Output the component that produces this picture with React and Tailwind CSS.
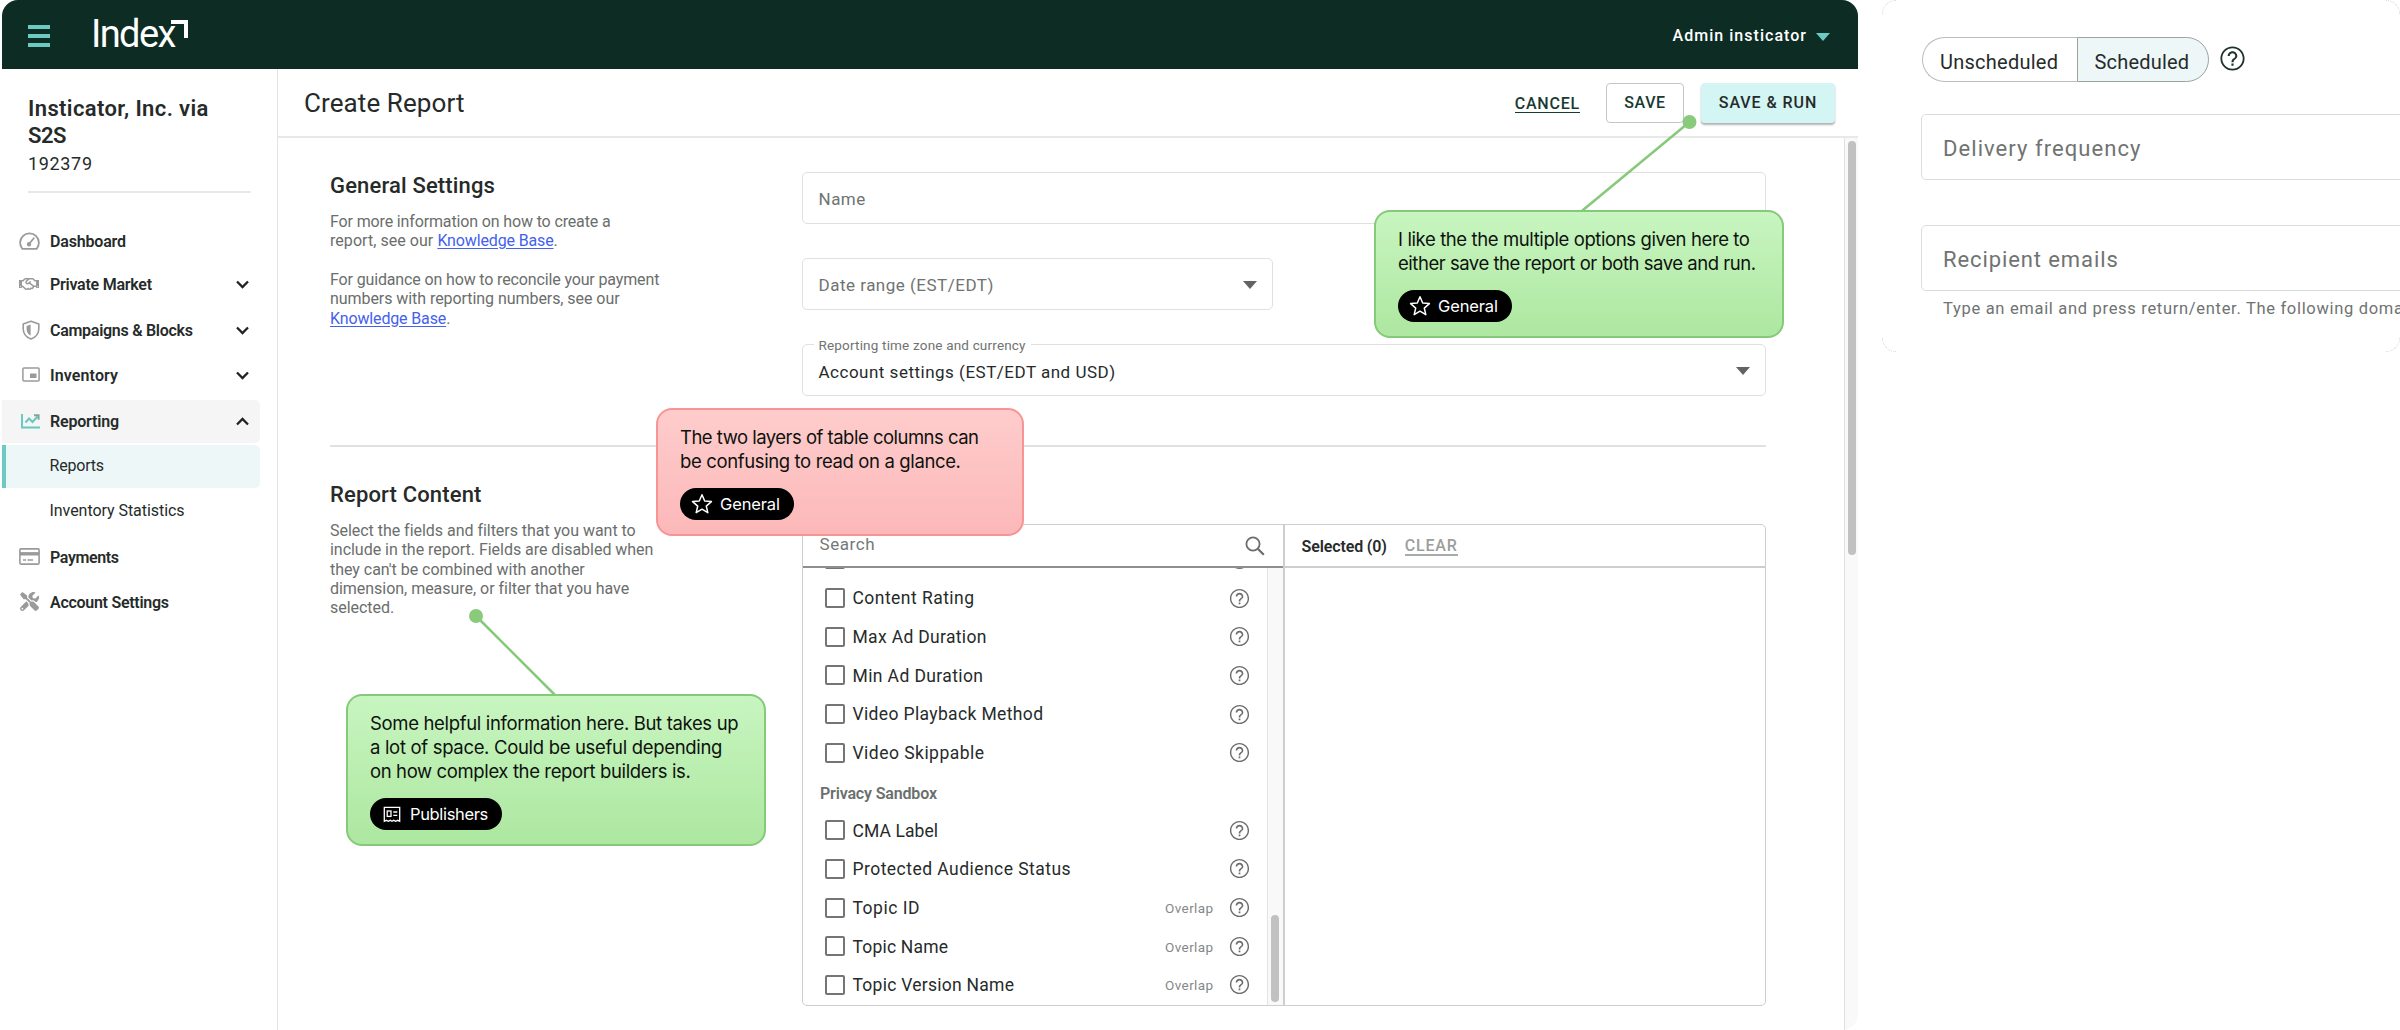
import React from "react";
import { FaRegHandshake, FaTools } from "react-icons/fa";

function GaugeIcon() {
  return (
    <svg className="w-[21px] h-[18px]" viewBox="0 0 21 18" fill="none" stroke="#9a9a9a" strokeWidth="1.8">
      <path d="M3.2 16.8h14.6c1-1.6 2.1-3.4 2.1-6A9.4 9.4 0 0 0 1.1 10.8c0 2.6 1 4.4 2.1 6z" strokeLinejoin="round" />
      <path d="M14.8 6.2l-4.6 5.6" strokeLinecap="round" />
      <circle cx="10" cy="12.2" r="1.3" fill="#9a9a9a" />
    </svg>
  );
}

function ShieldIcon() {
  return (
    <svg className="w-[18px] h-[20px]" viewBox="0 0 18 20" fill="none" stroke="#9a9a9a" strokeWidth="1.6">
      <path d="M9 1.2L16.8 4v4.8c0 5-3.3 8.6-7.8 10.2C4.5 17.4 1.2 13.8 1.2 8.8V4z" strokeLinejoin="round" />
      <path d="M8.6 4.6v11c-2.6-1.4-4-3.8-4-6.7V6z" fill="#9a9a9a" stroke="none" />
    </svg>
  );
}

function InventoryIcon() {
  return (
    <svg className="w-[18px] h-[15px]" viewBox="0 0 18 15" fill="none">
      <rect x="0.9" y="0.9" width="16.2" height="13" rx="1" stroke="#9a9a9a" strokeWidth="1.5" />
      <rect x="8" y="6.5" width="6.5" height="4.5" fill="#9a9a9a" />
    </svg>
  );
}

function ReportingIcon() {
  return (
    <svg className="w-[20px] h-[16px]" viewBox="0 0 20 16" fill="none" stroke="#62c9c0" strokeWidth="1.9">
      <path d="M1 1v13.5h18" />
      <path d="M4.5 9.5l3.5-4 3.5 3.5 5-5.5" />
      <path d="M13 2.2h4.6v4.6" stroke="#7da5a0" />
    </svg>
  );
}

function PaymentsIcon() {
  return (
    <svg className="w-[21px] h-[17px]" viewBox="0 0 21 17" fill="none">
      <rect x="0.9" y="0.9" width="19.2" height="15.2" rx="1" stroke="#9a9a9a" strokeWidth="1.6" />
      <path d="M1 5.8h19" stroke="#9a9a9a" strokeWidth="3.4" />
      <path d="M4 12h3M8.5 12h5.5" stroke="#9a9a9a" strokeWidth="1.7" />
    </svg>
  );
}

function Chevron({ up }) {
  return (
    <svg className="w-[13px] h-[9px]" viewBox="0 0 13 9" fill="none" stroke="#1e2423" strokeWidth="2.3">
      <path d={up ? "M1 7.5l5.5-5.5 5.5 5.5" : "M1 1.5l5.5 5.5 5.5-5.5"} />
    </svg>
  );
}

function Caret({ className }) {
  return (
    <svg className={className} viewBox="0 0 14 8" fill="currentColor">
      <path d="M0 0h14L7 8z" />
    </svg>
  );
}

function HelpIcon({ className }) {
  return (
    <svg className={className} viewBox="0 0 24 24" fill="currentColor">
      <path d="M11.1 18h1.8v-1.9h-1.8V18zM12 2C6.48 2 2 6.48 2 12s4.48 10 10 10 10-4.48 10-10S17.52 2 12 2zm0 18.5c-4.69 0-8.5-3.81-8.5-8.5s3.81-8.5 8.5-8.5 8.5 3.81 8.5 8.5-3.81 8.5-8.5 8.5zM12 6c-2.21 0-4 1.79-4 4h1.7c0-1.27 1.03-2.3 2.3-2.3s2.3 1.03 2.3 2.3c0 2-3.1 1.85-3.1 5h1.7c0-2.25 3.1-2.5 3.1-5 0-2.21-1.79-4-4-4z" />
    </svg>
  );
}

function StarIcon() {
  return (
    <svg className="w-[22px] h-[22px]" viewBox="0 0 22 22" fill="none" stroke="#fff" strokeWidth="1.5" strokeLinejoin="round">
      <path d="M11 1.8l2.7 6.2 6.7.6-5.1 4.5 1.5 6.6L11 16.2l-5.8 3.5 1.5-6.6L1.6 8.6l6.7-.6z" />
    </svg>
  );
}

function NewsIcon() {
  return (
    <svg className="w-[18px] h-[17px]" viewBox="0 0 18 17" fill="none" stroke="#fff" strokeWidth="1.3">
      <path d="M1.3 1.3h15.4v14l-2-1-2 1-1.9-1-1.8 1-1.8-1-1.9 1-2-1-2 1z" />
      <rect x="4.2" y="5" width="3.8" height="5.4" />
      <path d="M10.3 6h4M10.3 9.4h4" />
    </svg>
  );
}

function NavItem({ icon, label, tracking, className = "", chevron, active }) {
  return (
    <div className={`flex h-[43px] w-[258px] items-center rounded-r-[5px] ${active ? "bg-[#f5f5f5]" : ""} ${className}`}>
      <div className="flex w-[48px] shrink-0 items-center pb-0.5">{icon}</div>
      <span className={`flex-1 pt-px text-[16px] font-semibold whitespace-nowrap ${tracking}`}>{label}</span>
      {chevron && (
        <span className="mr-[11px] pb-px">
          <Chevron up={chevron === "up"} />
        </span>
      )}
    </div>
  );
}

function Sidebar() {
  return (
    <aside className="w-[276px] shrink-0 border-r border-[#dfe5e4] pt-[26px] text-[#262b2a]">
      <div className="ml-[26px] w-[223px]">
        <div className="text-[22px] leading-[27px] font-semibold whitespace-nowrap">
          <div className="tracking-[0.38px]">Insticator, Inc. via</div>
          <div className="tracking-[-0.5px]">S2S</div>
        </div>
        <div className="mt-[3px] text-[18px] leading-[24px] tracking-[0.66px]">192379</div>
        <div className="mt-[15px] h-[2px] bg-[#e8e8e8]" />
      </div>
      <nav className="mt-[27px]">
        <NavItem icon={<span className="ml-[17px]"><GaugeIcon /></span>} label="Dashboard" tracking="tracking-[-0.18px]" />
        <NavItem icon={<FaRegHandshake className="mt-px ml-[17px] h-[16px] w-[20px] text-[#9a9a9a]" />} label="Private Market" tracking="tracking-[-0.25px]" chevron="down" />
        <NavItem icon={<span className="ml-[20px]"><ShieldIcon /></span>} label="Campaigns & Blocks" tracking="tracking-[-0.28px]" chevron="down" className="mt-[3px]" />
        <NavItem icon={<span className="ml-[20px]"><InventoryIcon /></span>} label="Inventory" tracking="tracking-[0.12px]" chevron="down" className="mt-[2px]" />
        <NavItem icon={<span className="ml-[19px]"><ReportingIcon /></span>} label="Reporting" tracking="tracking-[-0.19px]" chevron="up" active className="mt-[3px]" />
        <div className="mt-[2px] flex h-[43px] w-[258px] items-center rounded-r-[5px] border-l-4 border-[#6bcac2] bg-[#edf7f8] pb-px pl-[43.5px] text-[16px] tracking-[-0.2px]">Reports</div>
        <div className="mt-px flex h-[43px] items-center pt-px pl-[47.5px] text-[16px] tracking-[-0.05px]">Inventory Statistics</div>
        <NavItem icon={<span className="ml-[17px]"><PaymentsIcon /></span>} label="Payments" tracking="tracking-[-0.38px]" className="mt-[4px]" />
        <NavItem icon={<FaTools className="ml-[18px] h-[19px] w-[19px] text-[#9a9a9a]" />} label="Account Settings" tracking="tracking-[-0.28px]" className="mt-[2px]" />
      </nav>
    </aside>
  );
}

function TopBar() {
  return (
    <header className="flex h-[69px] items-center bg-[#0d2c24] pl-[26px]">
      <div className="mt-[3px] flex w-[22px] flex-col gap-[5px]">
        <div className="h-[4px] bg-[#6bcac2]" />
        <div className="h-[4px] bg-[#6bcac2]" />
        <div className="h-[4px] bg-[#6bcac2]" />
      </div>
      <div className="relative ml-[41px] h-[69px] w-[97px] text-white">
        <span className="block pt-[12px] text-[38px] leading-[44px] font-normal tracking-[-1.6px]">Index</span>
        <span className="absolute top-[20px] right-0 h-[18px] w-[17px] border-t-[4px] border-r-[4px] border-white" />
      </div>
      <div className="flex-1" />
      <span className="mt-[3px] text-[16px] font-medium tracking-[1.03px] text-white">Admin insticator</span>
      <Caret className="mt-[5px] mr-[28px] ml-[9px] h-[8px] w-[14px] text-[#6bcac2]" />
    </header>
  );
}

function PageHeader() {
  return (
    <div className="flex h-[69px] shrink-0 items-center border-b-2 border-[#e8e8e8] pl-[26px] text-[#262b2a]">
      <h1 className="flex-1 pt-[2px] text-[26px] tracking-[0.1px]">Create Report</h1>
      <span className="mt-[2px] mr-[26px] border-b-[1.5px] border-[#173a32] text-[16px] leading-[17px] font-medium tracking-[0.79px] text-[#173a32]">CANCEL</span>
      <button className="flex h-[40px] w-[78px] items-center justify-center rounded-[4px] border-[1.5px] border-[#c4c6c6] pt-px text-[16px] font-medium tracking-[0.6px] text-[#173a32]">SAVE</button>
      <button className="mr-[23px] ml-[17px] flex h-[40px] w-[134px] items-center justify-center rounded-[4px] bg-[#d3f5f3] pt-px text-[16px] font-medium tracking-[0.93px] shadow-[0_2px_2px_rgba(0,0,0,0.3)]">SAVE &amp; RUN</button>
    </div>
  );
}

function Link({ children }) {
  return <span className="text-[#4361ee] underline underline-offset-2">{children}</span>;
}

function GeneralSettings() {
  return (
    <section className="flex pt-[34px]">
      <div className="w-[471.5px] shrink-0 whitespace-nowrap">
        <h2 className="text-[22px] leading-[28px] font-medium tracking-[0.16px] text-[#262b2a]">General Settings</h2>
        <div className="mt-[12px] text-[16px] leading-[19.33px] tracking-[-0.14px] text-[#6a6e6c]">
          <p>For more information on how to create a</p>
          <p><span className="tracking-[0.05px]">report, see our </span><Link>Knowledge Base</Link>.</p>
          <p className="mt-[19.33px]">For guidance on how to reconcile your payment</p>
          <p className="tracking-[-0.06px]">numbers with reporting numbers, see our</p>
          <p><Link>Knowledge Base</Link>.</p>
        </div>
      </div>
      <div className="flex flex-1 flex-col text-[17px] tracking-[0.5px] text-[#6f7371]">
        <div className="flex h-[52px] items-center rounded-[5px] border-[1.5px] border-[#dfe1e1] pt-[3px] pl-[16px]">Name</div>
        <div className="mt-[34px] flex h-[52px] w-[471px] items-center justify-between rounded-[5px] border-[1.5px] border-[#dfe1e1] pt-[3px] pr-[15px] pl-[16px]">
          Date range (EST/EDT)
          <Caret className="mb-px h-[8px] w-[14px] text-[#606563]" />
        </div>
        <div className="relative mt-[34px] flex h-[52px] items-center justify-between rounded-[5px] border-[1.5px] border-[#dfe1e1] pt-[6px] pr-[15px] pl-[16px] text-[#262b2a]">
          <span className="absolute -top-[9px] left-[11px] bg-white px-[5px] text-[13.5px] leading-[18px] tracking-[0.18px] text-[#6f7371]">Reporting time zone and currency</span>
          Account settings (EST/EDT and USD)
          <Caret className="mb-[4px] h-[8px] w-[14px] text-[#606563]" />
        </div>
      </div>
    </section>
  );
}

const fields = [
  { label: "" },
  { label: "Content Rating", t: "tracking-[0.46px]" },
  { label: "Max Ad Duration", t: "tracking-[0.33px]" },
  { label: "Min Ad Duration", t: "tracking-[0.39px]" },
  { label: "Video Playback Method", t: "tracking-[0.36px]" },
  { label: "Video Skippable", t: "tracking-[0.47px]" },
  { section: "Privacy Sandbox" },
  { label: "CMA Label", t: "tracking-[0.08px]" },
  { label: "Protected Audience Status", t: "tracking-[0.46px]" },
  { label: "Topic ID", t: "tracking-[0.51px]", overlap: true },
  { label: "Topic Name", t: "tracking-[0.19px]", overlap: true },
  { label: "Topic Version Name", t: "tracking-[0.26px]", overlap: true },
];

function FieldRow({ label, t, section, overlap }) {
  if (section) {
    return (
      <div className="flex h-[38.7px] items-center pt-[5px] pl-[17.5px] text-[16px] font-semibold tracking-[-0.16px] text-[#6b6f6d]">{section}</div>
    );
  }
  return (
    <div className="flex h-[38.7px] items-center pr-[16px] pl-[22px]">
      <span className="h-[20px] w-[20px] rounded-[2px] border-2 border-[#747675]" />
      <span className={`flex-1 pt-px pl-[8px] text-[17.5px] text-[#262b2a] ${t || ""}`}>{label}</span>
      {overlap && <span className="mr-[14px] pt-px text-[13.5px] tracking-[0.39px] text-[#858887]">Overlap</span>}
      <HelpIcon className="h-[23px] w-[23px] text-[#6b6d6c]" />
    </div>
  );
}

function ReportContent() {
  return (
    <section className="flex pt-[34px]">
      <div className="w-[471.5px] shrink-0 whitespace-nowrap">
        <h2 className="text-[22px] leading-[28px] font-medium tracking-[0.16px] text-[#262b2a]">Report Content</h2>
        <div className="mt-[12px] text-[16px] leading-[19.33px] tracking-[-0.03px] text-[#6a6e6c]">
          <p>Select the fields and filters that you want to</p>
          <p>include in the report. Fields are disabled when</p>
          <p>they can't be combined with another</p>
          <p>dimension, measure, or filter that you have</p>
          <p>selected.</p>
        </div>
      </div>
      <div className="mt-[43px] flex h-[482px] flex-1 rounded-[5px] border-[1.5px] border-[#cdcfce]">
        <div className="flex w-[482px] flex-col border-r-2 border-[#cdcfce]">
          <div className="flex h-[43px] shrink-0 items-center justify-between border-b-2 border-[#8c8f8d] pr-[18px] pl-[17px] text-[17px] tracking-[0.56px] text-[#757977]">
            <span className="mt-[-2px]">Search</span>
            <svg className="h-[20px] w-[20px]" viewBox="0 0 20 20" fill="none" stroke="#6a6d6b" strokeWidth="1.8">
              <circle cx="8" cy="8" r="6.6" />
              <path d="M12.8 12.8l6 6" strokeWidth="2.2" />
            </svg>
          </div>
          <div className="flex min-h-0 flex-1">
            <div className="flex-1 overflow-hidden">
              <div className="-mt-[28px]">
                {fields.map((f, i) => (
                  <FieldRow key={i} {...f} />
                ))}
              </div>
            </div>
            <div className="flex w-[16px] items-end justify-center border-l border-[#e3e3e3] bg-[#f9f9f9] pb-[3px]">
              <div className="h-[87px] w-[8px] rounded-full bg-[#c1c1c1]" />
            </div>
          </div>
        </div>
        <div className="flex-1">
          <div className="flex h-[43px] items-center gap-[18px] border-b-2 border-[#cdcfce] pt-[2px] pl-[17px] text-[16px]">
            <span className="font-semibold tracking-[-0.12px] text-[#262b2a]">Selected (0)</span>
            <span className="mt-px border-b-2 border-[#a9abaa] leading-[16px] font-medium tracking-[0.8px] text-[#9c9e9d]">CLEAR</span>
          </div>
        </div>
      </div>
    </section>
  );
}

function Tag({ icon, children, className }) {
  return (
    <div className={`flex h-[32px] items-center rounded-full bg-black text-[16.5px] text-white ${className}`}>
      {icon}
      {children}
    </div>
  );
}

function Notes() {
  return (
    <div className="font-['Inter',sans-serif] text-[18.5px] leading-[24px] whitespace-nowrap text-[#0e120e]">
      <svg className="absolute top-[110px] left-[1570px] h-[104px] w-[130px]" viewBox="0 0 130 104">
        <path d="M119.5 12L10 102.5" stroke="#87c97a" strokeWidth="2.5" />
        <circle cx="119.5" cy="12" r="7" fill="#8aca7d" />
      </svg>
      <svg className="absolute top-[605px] left-[465px] h-[93px] w-[100px]" viewBox="0 0 100 93">
        <path d="M11 11L92 92" stroke="#87c97a" strokeWidth="2.5" />
        <circle cx="11" cy="11" r="7" fill="#8aca7d" />
      </svg>
      <div className="absolute top-[210px] left-[1374px] h-[128px] w-[410px] rounded-[16px] border-2 border-[#87c97a] bg-linear-to-b from-[#c8f5c0] to-[#ade7a0] pt-[15px] pl-[22px]">
        <p className="tracking-[-0.39px]">I like the the multiple options given here to</p>
        <p className="tracking-[-0.47px]">either save the report or both save and run.</p>
        <Tag icon={<StarIcon />} className="mt-[15px] w-[114px] gap-[7px] pl-[11px] tracking-[-0.13px]">General</Tag>
      </div>
      <div className="absolute top-[408px] left-[656px] h-[128px] w-[368px] rounded-[16px] border-2 border-[#f99494] bg-linear-to-b from-[#fecccc] to-[#fcb8b9] pt-[15px] pl-[22px]">
        <p className="tracking-[-0.51px]">The two layers of table columns can</p>
        <p className="tracking-[-0.37px]">be confusing to read on a glance.</p>
        <Tag icon={<StarIcon />} className="mt-[15px] w-[114px] gap-[7px] pl-[11px] tracking-[-0.13px]">General</Tag>
      </div>
      <div className="absolute top-[694px] left-[346px] h-[152px] w-[420px] rounded-[16px] border-2 border-[#87c97a] bg-linear-to-b from-[#c8f5c0] to-[#ade7a0] pt-[15px] pl-[22px]">
        <p className="tracking-[-0.34px]">Some helpful information here. But takes up</p>
        <p className="tracking-[-0.32px]">a lot of space. Could be useful depending</p>
        <p className="tracking-[-0.38px]">on how complex the report builders is.</p>
        <Tag icon={<NewsIcon />} className="mt-[15px] w-[132px] gap-[9px] pl-[13px] tracking-[-0.35px]">Publishers</Tag>
      </div>
    </div>
  );
}

function SchedulePanel() {
  return (
    <div className="relative ml-[24px] h-[352px] w-[518px] shrink-0 overflow-hidden pt-[37px] pl-[39px] text-[#262b2a]">
      <span className="absolute top-0 left-0 h-[14px] w-[14px] rounded-tl-[14px] border-t border-l border-dotted border-[#d9d9d9]" />
      <span className="absolute top-0 right-0 h-[14px] w-[14px] rounded-tr-[14px] border-t border-r border-dotted border-[#d9d9d9]" />
      <span className="absolute bottom-0 left-0 h-[14px] w-[14px] rounded-bl-[14px] border-b border-l border-dotted border-[#d9d9d9]" />
      <span className="absolute right-0 bottom-0 h-[14px] w-[14px] rounded-br-[14px] border-r border-b border-dotted border-[#d9d9d9]" />
      <div className="flex items-center text-[20px]">
        <div className="ml-px flex h-[45px] w-[155px] items-center rounded-l-full border-[1.5px] border-r-0 border-[#b9bcbc] pt-[4px] pl-[17px] tracking-[0.25px]">Unscheduled</div>
        <div className="flex h-[45px] w-[132px] items-center rounded-r-full border-[1.5px] border-[#9da1a1] bg-[#edf7f8] pt-[4px] pl-[16.5px] tracking-[0.19px]">Scheduled</div>
        <HelpIcon className="mb-[2px] ml-[9px] h-[29px] w-[29px] text-[#1f332d]" />
      </div>
      <div className="mt-[32px] flex h-[66px] w-[600px] items-center rounded-[5px] border-[1.5px] border-[#dbdddd] pt-[3px] pl-[21px] text-[22px] tracking-[1.06px] text-[#6f7371]">Delivery frequency</div>
      <div className="mt-[45px] flex h-[66px] w-[600px] items-center rounded-[5px] border-[1.5px] border-[#dbdddd] pt-[3px] pl-[21px] text-[22px] tracking-[0.9px] text-[#6f7371]">Recipient emails</div>
      <div className="mt-[6px] pl-[22px] text-[16.5px] leading-[24px] tracking-[0.69px] whitespace-nowrap text-[#6f7371]">Type an email and press return/enter. The following domains</div>
    </div>
  );
}

export default function App() {
  return (
    <div className="relative flex h-[1030px] w-[2400px] overflow-hidden bg-white pl-[2px] font-['Roboto',sans-serif]">
      <div className="flex h-[1030px] w-[1856px] shrink-0 flex-col overflow-hidden rounded-[16px]">
        <TopBar />
        <div className="flex min-h-0 flex-1">
          <Sidebar />
          <main className="flex min-w-0 flex-1 flex-col">
            <PageHeader />
            <div className="flex min-h-0 flex-1">
              <div className="w-[1566px] shrink-0 pr-[78px] pl-[52px]">
                <GeneralSettings />
                <div className="mt-[49px] h-[2px] bg-[#e0e2e2]" />
                <ReportContent />
              </div>
              <div className="flex flex-1 justify-center border-l border-[#e0e0e0] bg-[#f9f9f9] pt-[3px]">
                <div className="h-[414px] w-[8px] rounded-full bg-[#c1c1c1]" />
              </div>
            </div>
          </main>
        </div>
      </div>
      <SchedulePanel />
      <Notes />
    </div>
  );
}
